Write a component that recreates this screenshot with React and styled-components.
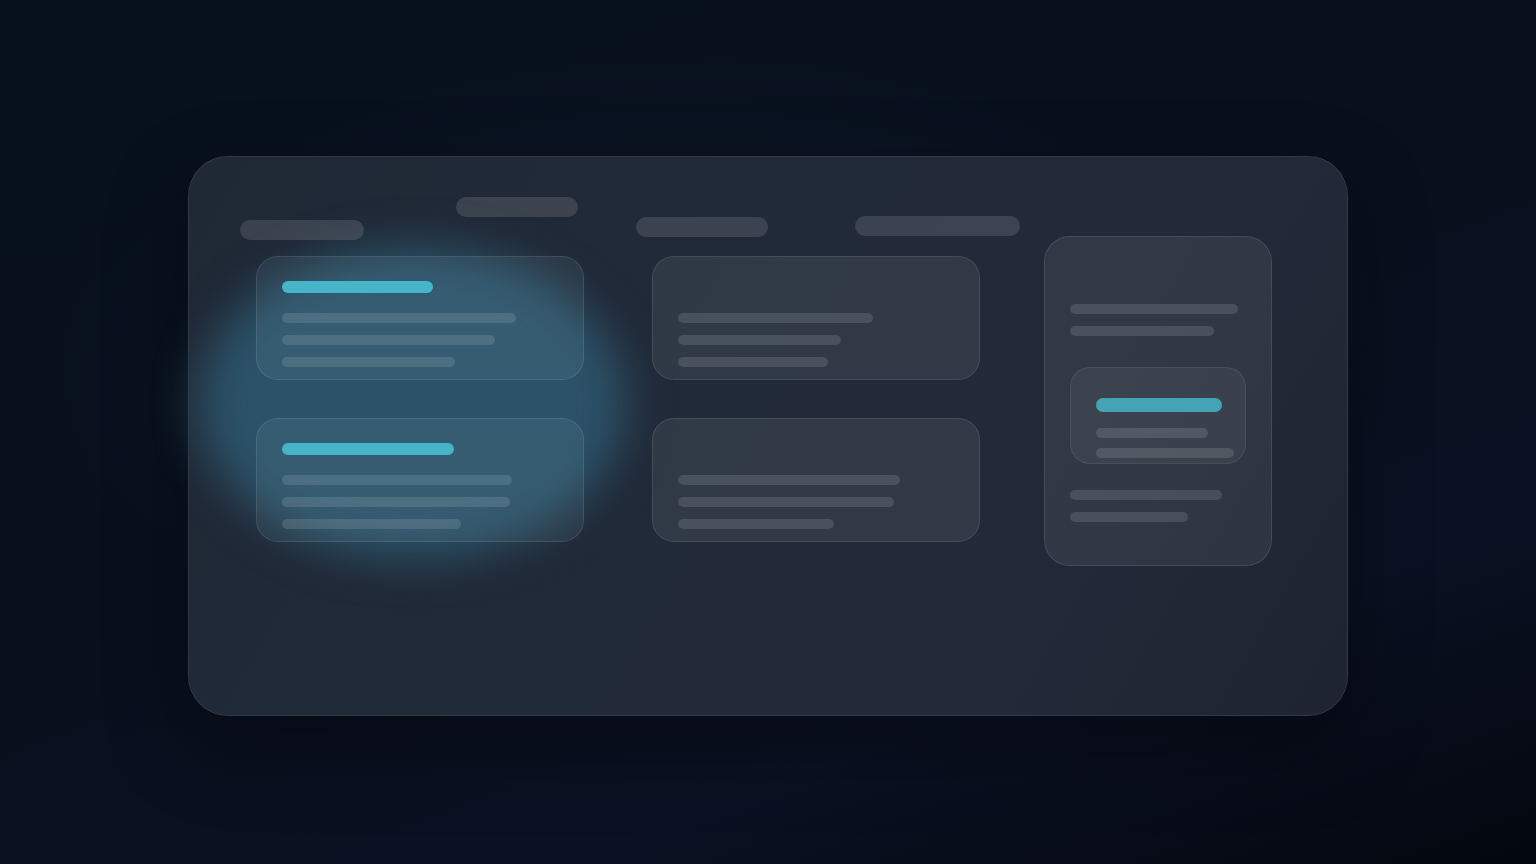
import React from "react";
import styled, { createGlobalStyle } from "styled-components";

const GlobalStyle = createGlobalStyle`
  * {
    box-sizing: border-box;
  }
  html, body {
    margin: 0;
    padding: 0;
    height: 100%;
  }
  body {
    font-family: Inter, "Noto Sans", sans-serif;
    background: #070f1b;
  }
`;

const Page = styled.main`
  width: 100vw;
  height: 100vh;
  display: flex;
  justify-content: center;
  padding-top: 156px;
  overflow: hidden;
  background:
    radial-gradient(ellipse 60% 55% at 45% 45%, rgba(30, 44, 66, 0.3), transparent 70%),
    linear-gradient(160deg, #07111d 0%, #08101d 45%, #0a1122 75%, #04070f 100%);
`;

const Panel = styled.section`
  position: relative;
  width: 1160px;
  height: 560px;
  border-radius: 40px;
  border: 1px solid rgba(255, 255, 255, 0.08);
  background: linear-gradient(120deg, #1f2835 0%, #212a38 45%, #222a39 70%, #1e2431 100%);
  box-shadow: 0 30px 80px rgba(0, 0, 0, 0.35);
  padding-top: 40px;
`;

const Glow = styled.div`
  position: absolute;
  left: 10px;
  top: 90px;
  width: 426px;
  height: 312px;
  border-radius: 50%;
  background: rgba(44, 86, 108, 0.92);
  filter: blur(22px);
  pointer-events: none;
`;

const Header = styled.div`
  position: relative;
  display: flex;
  align-items: flex-start;
  padding-left: 51px;
  height: 39px;
`;

const Pill = styled.div`
  width: ${(p) => p.$w}px;
  height: 20px;
  margin-top: ${(p) => p.$top || 0}px;
  margin-left: ${(p) => p.$left || 0}px;
  border-radius: 10px;
  background: rgba(255, 255, 255, 0.12);
`;

const Board = styled.div`
  position: relative;
  display: flex;
  align-items: flex-start;
  padding-left: 67px;
`;

const Column = styled.div`
  display: flex;
  flex-direction: column;
  gap: 38px;
  width: 328px;
  padding-top: 20px;
  margin-right: ${(p) => p.$gap}px;
`;

const Card = styled.div`
  display: flex;
  flex-direction: column;
  height: 124px;
  padding: 24px 25px 12px;
  border-radius: 22px;
  border: 1px solid rgba(255, 255, 255, 0.1);
  background: ${(p) =>
    p.$lit ? "rgba(150, 200, 215, 0.09)" : "rgba(255, 255, 255, 0.07)"};
`;

const Title = styled.div`
  width: ${(p) => p.$w}px;
  height: 14px;
  border-radius: 7px;
  margin-bottom: ${(p) => p.$mb || 20}px;
  background: ${(p) => (p.$hidden ? "transparent" : p.$dim ? "#44a4b6" : "#46b5ca")};
`;

const Line = styled.div`
  width: ${(p) => p.$w}px;
  height: 10px;
  border-radius: 5px;
  background: rgba(255, 255, 255, 0.12);
`;

const Lines = styled.div`
  display: flex;
  flex-direction: column;
  gap: ${(p) => p.$gap || 12}px;
  margin-top: ${(p) => p.$top || 0}px;
`;

const SideCard = styled.div`
  width: 228px;
  height: 330px;
  padding: 67px 25px 0;
  border-radius: 26px;
  border: 1px solid rgba(255, 255, 255, 0.1);
  background: rgba(255, 255, 255, 0.07);
`;

const InnerCard = styled.div`
  width: 176px;
  height: 97px;
  margin-top: 31px;
  padding: 30px 0 0 25px;
  border-radius: 20px;
  border: 1px solid rgba(255, 255, 255, 0.08);
  background: rgba(255, 255, 255, 0.05);
  overflow: hidden;
`;

const leftCards = [
  { title: 151, lines: [234, 213, 173] },
  { title: 172, lines: [230, 228, 179] },
];

const midCards = [
  { lines: [195, 163, 150] },
  { lines: [222, 216, 156] },
];

export default function App() {
  return (
    <>
      <GlobalStyle />
      <Page>
        <Panel>
          <Glow />
          <Header>
            <Pill $w={124} $top={23} />
            <Pill $w={122} $left={92} />
            <Pill $w={132} $left={58} $top={20} />
            <Pill $w={165} $left={87} $top={19} />
          </Header>
          <Board>
            <Column $gap={68}>
              {leftCards.map((c, i) => (
                <Card key={i} $lit>
                  <Title $w={c.title} />
                  <Lines>
                    {c.lines.map((w, j) => (
                      <Line key={j} $w={w} />
                    ))}
                  </Lines>
                </Card>
              ))}
            </Column>
            <Column $gap={64}>
              {midCards.map((c, i) => (
                <Card key={i}>
                  <Title $w={10} $hidden />
                  <Lines>
                    {c.lines.map((w, j) => (
                      <Line key={j} $w={w} />
                    ))}
                  </Lines>
                </Card>
              ))}
            </Column>
            <SideCard>
              <Lines>
                <Line $w={168} />
                <Line $w={144} />
              </Lines>
              <InnerCard>
                <Title $w={126} $mb={16} $dim />
                <Lines $gap={10}>
                  <Line $w={112} />
                  <Line $w={138} />
                </Lines>
              </InnerCard>
              <Lines $top={26}>
                <Line $w={152} />
                <Line $w={118} />
              </Lines>
            </SideCard>
          </Board>
        </Panel>
      </Page>
    </>
  );
}
